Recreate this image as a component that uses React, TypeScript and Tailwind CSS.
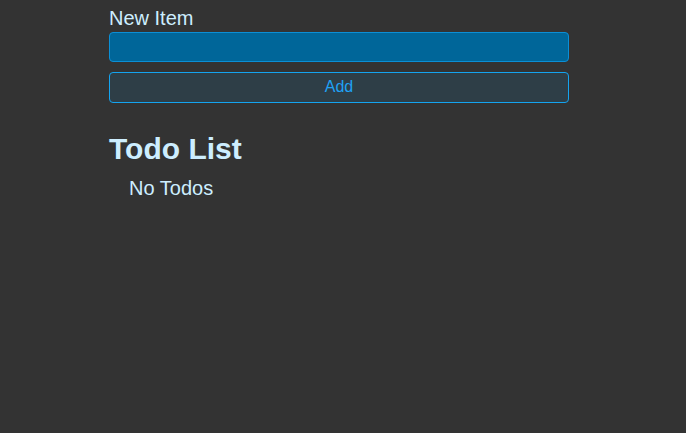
import React from "react";

export default function App() {
  return (
    <div className="min-h-[433px] w-full bg-[#333333] font-['Liberation_Sans',Arial,sans-serif] text-[#cdeeff]">
      <div className="ml-[109px] w-[460px] pt-[7px]">
        <label className="block text-[20px] leading-[23px]">New Item</label>
        <input
          type="text"
          className="mt-[2px] block h-[30px] w-full rounded-[4px] border border-[#0b8fd6] bg-[#006699] px-2 text-white outline-none"
        />
        <button className="mt-[10px] block h-[31px] w-full rounded-[4px] border border-[#14a4f0] bg-[#2e3e47] pb-[2px] text-[16px] text-[#1fa2f5]">
          Add
        </button>
        <h1 className="mt-[28px] text-[30px] font-bold leading-[35px]">Todo List</h1>
        <div className="mt-[11px] pl-[20px] text-[20px] leading-[23px]">No Todos</div>
      </div>
    </div>
  );
}
